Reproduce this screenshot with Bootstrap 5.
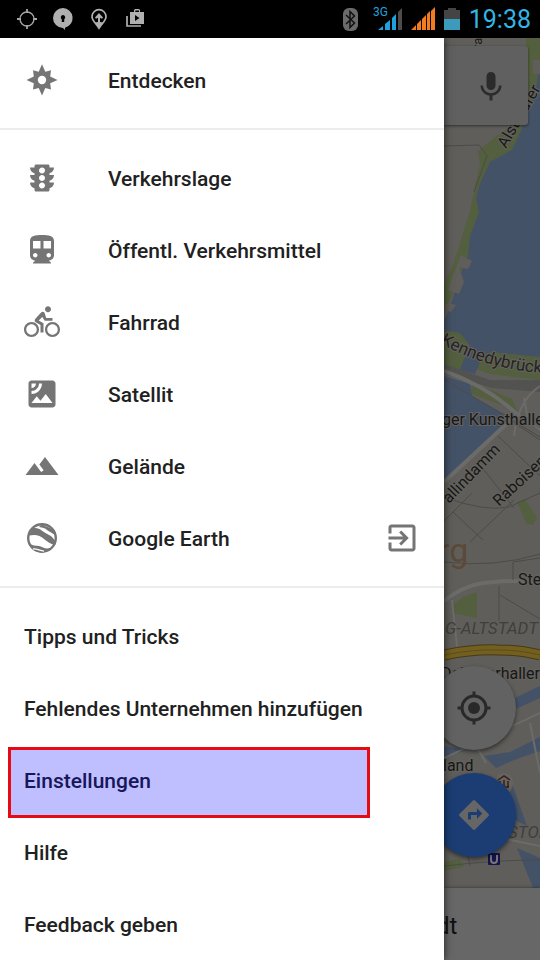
<!DOCTYPE html>
<html lang="de">
<head>
<meta charset="utf-8">
<meta name="viewport" content="width=device-width, initial-scale=1">
<title>Maps</title>
<link href="https://cdn.jsdelivr.net/npm/bootstrap@5.3.0/dist/css/bootstrap.min.css" rel="stylesheet">
<style>
  body { font-family: Roboto, "Noto Sans", sans-serif; background: #fff; }
  .status { background: #000; height: 38px; padding: 0 9px 0 15px; }
  .status-left { gap: 12px; }
  .status-right { gap: 9px; }
  .clock { color: #33b5e5; font-size: 25px; line-height: 36px; padding-top: 2px; }
  .drawer { z-index: 3; box-shadow: 0 0 8px rgba(0,0,0,.7); padding-top: 6px; }
  .drawer ul + ul { border-top: 2px solid #ececec; padding-top: 12px; }
  .drawer ul:not(:last-child) { padding-bottom: 12px; }
  .entry { height: 72px; padding: 0 24px; font-size: 21px; line-height: 24px; font-weight: 500; color: #212121; }
  .entry span { padding-top: 2px; }
  .entry svg { width: 36px; height: 36px; fill: #757575; flex: none; }
  .entry .label-icon { margin-right: 48px; }
  .marked::after { content: ""; position: absolute; inset: 3px 74px -2px 8px; border: 3px solid #e60a12; background: rgba(0,0,255,.25); }
  .side { width: 96px; background: #605e5a; }
  .side svg { display: block; }
  .map-art { position: absolute; inset: 0; width: 100%; height: 100%; }
  .voice { position: absolute; top: 8px; left: 0; right: 12px; height: 79px; background: #606060; border-radius: 0 3px 3px 0; box-shadow: 0 1px 3px rgba(0,0,0,.5); padding: 3px 19px 0 0; }
  .fab { position: absolute; left: -12px; width: 84px; height: 84px; box-shadow: 0 2px 4px rgba(0,0,0,.5); }
  .fab-locate { bottom: 138px; background: #626262; }
  .fab-route { bottom: 31px; background: #1b3d74; }
  .place { height: 72px; background: #676767; color: #111; font-size: 24px; line-height: 76px; z-index: 2; box-shadow: 0 0 3px rgba(0,0,0,.5); }
  .place span { margin-left: -8px; }
</style>
<script src="https://cdn.jsdelivr.net/npm/bootstrap@5.3.0/dist/js/bootstrap.bundle.min.js"></script>
</head>
<body>
<div class="d-flex flex-column min-vh-100">
  <header class="status d-flex align-items-center justify-content-between">
    <div class="status-left d-flex align-items-center">
      <svg width="24" height="24" viewBox="0 0 24 24" fill="none" stroke="#a6a6a6"><circle cx="12" cy="12" r="7" stroke-width="1.3"/><path d="M12 2v4M12 18v4M2 12h4M18 12h4" stroke-width="1.8"/></svg>
      <svg width="24" height="24" viewBox="0 0 24 24"><path fill="#b0b0b0" d="M12 1a10 10 0 1 0 0 20l2 2v-2.300A10 10 0 0 0 12 1z"/><path d="M12 8a2.300 2.300 0 0 1 1.200 4.200V15h-2.400v-2.800A2.300 2.300 0 0 1 12 8z"/></svg>
      <svg width="24" height="24" viewBox="0 0 24 24"><path d="M12 2.700a7 7 0 0 0-7 7c0 3.500 3 5.500 7 11.500 4-6 7-8 7-11.500a7 7 0 0 0-7-7z" stroke="#b0b0b0" stroke-width="1.700"/><path fill="#b0b0b0" d="M12 6l4 4.500-1 1.200-2-1V15l3 .5-4 6-4-6 3-.5v-4.300l-2 1-1-1.200z"/></svg>
      <svg width="24" height="24" viewBox="0 0 24 24"><path d="M4 9v10h14" fill="none" stroke="#b0b0b0" stroke-width="1.700"/><path fill="#b0b0b0" fill-rule="evenodd" d="M7 5h4V3l1-1h4l1 1v2h4v12H7zm5.300 0H16V3.500h-3.700zM12 8v6l4.500-3z"/></svg>
    </div>
    <div class="status-right d-flex align-items-center">
      <svg width="22" height="26" viewBox="0 0 22 26"><rect x="0" y="2" width="15" height="23" rx="6" fill="#6b6b6b"/><path d="M3 9l8.500 8-4.500 4.500V5.500L11.500 10 3 18" fill="none" stroke="#111" stroke-width="1.500"/></svg>
      <svg width="28" height="26" viewBox="0 0 28 26" overflow="visible"><g fill="#1fa2dc"><path d="M4 24l5-4v4zM11 18l5-4v10h-5zM18 12l4-4v16h-4z"/><text x="-1" y="10" font-size="12">3G</text></g><path fill="#4c4c4c" d="M24 6l4-4v22h-4z"/></svg>
      <svg width="24" height="26" viewBox="0 0 24 26"><path fill="#f47b20" d="M0 24l5-5v5zM6 18l4-4v10H6zM11 13l4-4v15h-4zM16 8l3-3v19h-3zM20 5l4-4v23h-4z"/></svg>
      <svg width="16" height="26" viewBox="0 0 16 26"><path fill="#444" d="M4 2h8v2h4v10H0V4h4z"/><path fill="#3c9bbd" d="M0 13h16v11H0z"/></svg>
      <span class="clock">19:38</span>
    </div>
  </header>

  <main class="d-flex flex-grow-1">
    <nav class="drawer bg-white flex-grow-1 position-relative" aria-label="Menü">
      <ul class="list-unstyled mb-0">
        <li><a href="#entdecken" class="entry d-flex align-items-center text-decoration-none">
          <svg class="label-icon" viewBox="0 0 36 36"><path fill-rule="evenodd" d="M18 2.300l3.300 7.500 5.700-1.600-.8 6.400 7.300 3.400-7.300 3.300.8 6.300-5.700-1.500L18 33.500l-3.300-7.400L9 27.600l.8-6.300L2.500 18l7.300-3.400L9 8.200l5.700 1.600zM18 13.800a4.200 4.200 0 1 0 0 8.400 4.200 4.200 0 0 0 0-8.400z"/></svg><span>Entdecken</span></a></li>
      </ul>
      <ul class="list-unstyled mb-0">
        <li><a href="#verkehr" class="entry d-flex align-items-center text-decoration-none">
          <svg class="label-icon" viewBox="0 0 24 24"><path d="M20 10h-3V8.860c1.720-.45 3-2 3-3.860h-3V4c0-.55-.45-1-1-1H8c-.55 0-1 .45-1 1v1H4c0 1.860 1.280 3.410 3 3.860V10H4c0 1.860 1.280 3.410 3 3.860V15H4c0 1.860 1.280 3.410 3 3.860V20c0 .55.45 1 1 1h8c.55 0 1-.45 1-1v-1.140c1.720-.45 3-2 3-3.860h-3v-1.140c1.720-.45 3-2 3-3.860zm-8 9c-1.110 0-2-.9-2-2s.89-2 2-2c1.100 0 2 .9 2 2s-.89 2-2 2zm0-5c-1.110 0-2-.9-2-2s.89-2 2-2c1.100 0 2 .9 2 2s-.89 2-2 2zm0-5c-1.110 0-2-.9-2-2s.89-2 2-2c1.100 0 2 .89 2 2s-.89 2-2 2z"/></svg><span>Verkehrslage</span></a></li>
        <li><a href="#oepnv" class="entry d-flex align-items-center text-decoration-none">
          <svg class="label-icon" viewBox="0 0 24 24"><path d="M12 2c-4.420 0-8 .5-8 4v9.500C4 17.430 5.570 19 7.500 19L6 20.500v.5h12v-.5L16.500 19c1.930 0 3.500-1.570 3.500-3.500V6c0-3.500-3.580-4-8-4zM7.500 17c-.83 0-1.500-.67-1.500-1.500S6.670 14 7.500 14s1.500.67 1.500 1.500S8.330 17 7.500 17zm3.500-6H6V6h5v5zm5.500 6c-.83 0-1.500-.67-1.500-1.500s.67-1.500 1.500-1.500 1.500.67 1.500 1.500-.67 1.500-1.500 1.500zm1.500-6h-5V6h5v5z"/></svg><span>Öffentl. Verkehrsmittel</span></a></li>
        <li><a href="#fahrrad" class="entry d-flex align-items-center text-decoration-none">
          <svg class="label-icon" viewBox="0 0 24 24"><path d="M16 5.500c1.100 0 2-.9 2-2s-.9-2-2-2-2 .9-2 2 .9 2 2 2zM5 12c-2.800 0-5 2.200-5 5s2.200 5 5 5 5-2.200 5-5-2.200-5-5-5zm0 8.500c-1.900 0-3.500-1.600-3.500-3.500s1.600-3.500 3.500-3.500 3.500 1.600 3.500 3.500-1.600 3.500-3.500 3.500zm9.800-11.200H19v1.800h-5.200l-1.600-2.400-2.400 2.300 3.200 1.800v6.200h-2v-5l-3.200-1.900c-.9-.5-.9-1.600-.2-2.300l3.800-4.100c.7-.7 1.800-.6 2.300.2zM19 12c-2.800 0-5 2.200-5 5s2.200 5 5 5 5-2.200 5-5-2.200-5-5-5zm0 8.500c-1.900 0-3.500-1.600-3.500-3.500s1.600-3.500 3.500-3.500 3.500 1.600 3.500 3.500-1.600 3.500-3.500 3.500z"/></svg><span>Fahrrad</span></a></li>
        <li><a href="#satellit" class="entry d-flex align-items-center text-decoration-none">
          <svg class="label-icon" viewBox="0 0 24 24"><path d="M19 3H5c-1.100 0-2 .9-2 2v14c0 1.100.9 2 2 2h14c1.100 0 2-.9 2-2V5c0-1.100-.9-2-2-2zM5 5h3C8 6.650 6.660 8 5 8V5zm0 7v-2c2.760 0 5-2.250 5-5h2C12 8.860 8.870 12 5 12zm0 6l3.500-4.500L11 16.510 14.500 12l4.500 6H5z"/></svg><span>Satellit</span></a></li>
        <li><a href="#gelaende" class="entry d-flex align-items-center text-decoration-none">
          <svg class="label-icon" viewBox="0 0 24 24"><path d="M14 6l-3.750 5 2.850 3.800-1.600 1.200C9.810 13.750 7 10 7 10l-6 8h22L14 6z"/></svg><span>Gelände</span></a></li>
        <li><a href="#earth" class="entry d-flex align-items-center text-decoration-none">
          <svg class="label-icon" viewBox="0 0 36 36"><circle cx="18" cy="18" r="13.800" fill="none" stroke="#757575" stroke-width="2.400"/><path d="M8 8.500c4-1 7-.2 10 2.300 4 3.300 8 4 10 6.200 2 2 3 4 4 5l-1 3c-5-1-8-3.500-11-6-4-3.500-8-5-15-3.500zM18 4c2 2 5 2.500 8 4 3 1.600 5 4 6 8-3-3-6-3.500-9-6-2-1.800-4-2.500-8-3zM4 20c1 3 2.500 5 6 5.500 4 .5 6 .2 9 2 2.500 1.300 5 1.200 8 .5-3 3-7 5-11 4.500C9 31 5 27 4 20z"/><path d="M9 29c4-.5 6 1.500 11 2.200" fill="none" stroke="#fff" stroke-width="1.300"/></svg>
          <span class="flex-grow-1">Google Earth</span>
          <svg viewBox="0 0 24 24"><path d="M10.090 15.590L11.500 17l5-5-5-5-1.410 1.410L12.670 11H3v2h9.670l-2.580 2.590zM19 3H5c-1.110 0-2 .9-2 2v4h2V5h14v14H5v-4H3v4c0 1.100.89 2 2 2h14c1.100 0 2-.9 2-2V5c0-1.100-.9-2-2-2z"/></svg></a></li>
      </ul>
      <ul class="list-unstyled mb-0">
        <li><a href="#tipps" class="entry d-flex align-items-center text-decoration-none"><span>Tipps und Tricks</span></a></li>
        <li><a href="#unternehmen" class="entry d-flex align-items-center text-decoration-none"><span>Fehlendes Unternehmen hinzufügen</span></a></li>
        <li><a href="#einstellungen" class="entry marked position-relative d-flex align-items-center text-decoration-none"><span>Einstellungen</span></a></li>
        <li><a href="#hilfe" class="entry d-flex align-items-center text-decoration-none"><span>Hilfe</span></a></li>
        <li><a href="#feedback" class="entry d-flex align-items-center text-decoration-none"><span>Feedback geben</span></a></li>
      </ul>
    </nav>

    <section class="side d-flex flex-column flex-shrink-0" aria-label="Karte">
      <div class="position-relative flex-grow-1 overflow-hidden">
        <svg class="map-art" viewBox="444 38 96 850" preserveAspectRatio="xMinYMin slice">
          <defs><path id="bridge" d="M440 343Q486 370 552 374"/></defs>
          <!-- parks and shore -->
          <g fill="#535f3e">
            <path d="M526 38h14v60l-8 26-22 28-20 14-12 30 3 20-10 28-6 24-16 34-5 10v-27l11-26 15-48 6-30 4-16-2-14 20-16 20-14 8-30z"/>
            <path d="M444 326l16 5 10 12-1 16-9 18-16-3z"/><path d="M478 354l8-5 54 8v23l-50-6-14-5z"/>
            <path d="M472 382l40 17 6 14-16-8-31-11z"/>
            <path d="M517 502l8-3 12 19-4 7-6-1z"/><path d="M453 605l10-8 14-5v26l-24-5z"/>
            <path d="M444 862l16-3 4 8-20 4z"/>
          </g>
          <!-- Alster and canals -->
          <g fill="#445267">
            <path d="M540 66l-6 32-10 26-12 26-22 12-10 22-4 14 3 14-9 24-2 20-8 20-10 30-6 16v8l16 3 10 12v6l15 6 6-5 49 5z"/>
            <path d="M470 344l15 6-10 24-15-4z"/><path d="M444 376l26 8 2 12 36 20-2 8-62 60z"/>
            <path d="M494 708l46-22v12l-44 20z"/><path d="M484 756l26-4 30-15v14l-26 9-18 8z"/><path d="M513 786l14 40-12-6-6-26z"/><path d="M517 848l23 10v30h-7z"/><path d="M444 746l22 4-22 8z"/>
          </g>
          <g fill="#605e5a"><path d="M461 255l11 6-4 8-9-2 5 15-5 12-11-4 8-22z"/><path d="M446 303l10 2-5 7-7-2z"/><path d="M533 60h7v14h-7z"/></g>
          <path fill="#525250" d="M444 364l46 16h50v12l-48-4-48-14z"/>
          <!-- roads -->
          <g fill="none" stroke="#6b6b69" stroke-width="4">
            <path d="M444 371q45 16 76 46M444 601q22-18 50-19 24-2 46 0M513 418l-69 64"/>
            <path d="M540 386q-22 14-26 50M524 398l4 22 12 10M444 758l96-45M530 723l10 50M470 735l16 28M500 838l40 8M452 600l6 56" stroke-width="2"/>
          </g>
          <g fill="none" stroke="#4c4b48" stroke-width="1">
            <path d="M444 146l35-1 8 11-13 36M540 440l-30-20M444 497q40 15 65 10l31-14M484 470l30 38M498 436l42 40M472 493l-28 28M514 500l-44 42M453 512l30 28M444 562q50 6 96-8M513 562v18M499 586v35M500 595l40 24M513 562l27-4M444 866q50-6 96-6M465 840l5 26M484 780l10 30M440 377l100 60"/>
          </g>
          <path d="M444 655q30-6 54-5 23 0 42 5" fill="none" stroke="#463a17" stroke-width="11"/>
          <path d="M444 655q30-6 54-5 23 0 42 5" fill="none" stroke="#735f1e" stroke-width="9"/>
          <path d="M444 655q30-6 54-5 23 0 42 5" fill="none" stroke="#5c4d20" stroke-width="1"/>
          <!-- place names -->
          <g fill="#171717" font-size="16" stroke="#65635f" stroke-width="2" paint-order="stroke">
            <text transform="translate(482 49) rotate(-90)" font-size="13">ra</text>
            <text transform="translate(506 149) rotate(-60)">Alsterufer</text>
            <text font-size="17" fill="#25231f"><textPath href="#bridge">Kennedybrück</textPath></text>
            <text x="442" y="425">ger Kunsthalle</text>
            <text transform="translate(449 504) rotate(-46)">allindamm</text>
            <text transform="translate(499 507) rotate(-43)">Raboisen</text>
            <text x="518" y="585">Ste</text>
            <text x="441" y="679">Deichtorhaller</text>
            <text x="443" y="771">land</text>
          </g>
          <text x="438" y="562" font-size="34" fill="#5b4a38">rg</text>
          <g fill="#403f3d" font-style="italic"><text x="445" y="634" font-size="17">G-ALTSTADT</text><text x="508" y="838" font-size="17">STOR</text></g>
          <circle cx="504" cy="782" r="9" fill="#666461"/>
          <path d="M498 780l6-4 6 4M500 781v7M504 780v8M508 781v7M499 787h10" fill="none" stroke="#362018" stroke-width="1.500"/>
          <rect x="488" y="853" width="12" height="12" rx="1" fill="#14144e"/>
          <path d="M491 855v5q0 3 3 3t3-3v-5" fill="none" stroke="#777" stroke-width="2"/>
        </svg>
        <div class="voice d-flex align-items-center justify-content-end">
          <button type="button" class="btn p-0 border-0" aria-label="Sprachsuche"><svg width="36" height="36" viewBox="0 0 24 24" fill="#2b2b2b"><path d="M12 14c1.660 0 3-1.340 3-3V5c0-1.660-1.340-3-3-3S9 3.340 9 5v6c0 1.660 1.340 3 3 3zm5.300-3c0 3-2.540 5.100-5.300 5.100S6.700 14 6.700 11H5c0 3.410 2.720 6.230 6 6.720V21h2v-3.280c3.280-.48 6-3.300 6-6.720h-1.700z"/></svg></button>
        </div>
        <button type="button" class="btn fab fab-locate rounded-circle p-0 border-0 d-flex align-items-center justify-content-center" aria-label="Mein Standort"><svg width="36" height="36" viewBox="0 0 24 24" fill="none" stroke="#292929" stroke-width="2"><circle cx="12" cy="12" r="8"/><path d="M12 1v3M12 20v3M1 12h3M20 12h3"/><circle cx="12" cy="12" r="4" fill="#292929" stroke="none"/></svg></button>
        <button type="button" class="btn fab fab-route rounded-circle p-0 border-0 d-flex align-items-center justify-content-center" aria-label="Route"><svg width="36" height="36" viewBox="0 0 24 24" fill="#666"><path d="M21.710 11.290l-9-9a1 1 0 0 0-1.410 0l-9 9a1 1 0 0 0 0 1.410l9 9c.39.39 1.020.39 1.410 0l9-9a1 1 0 0 0 0-1.410zM14 14.500V12h-4v3H8v-4c0-.55.45-1 1-1h5V7.500l3.500 3.500-3.500 3.500z"/></svg></button>
      </div>
      <div class="place position-relative"><span>dt</span></div>
    </section>
  </main>
</div>
</body>
</html>
